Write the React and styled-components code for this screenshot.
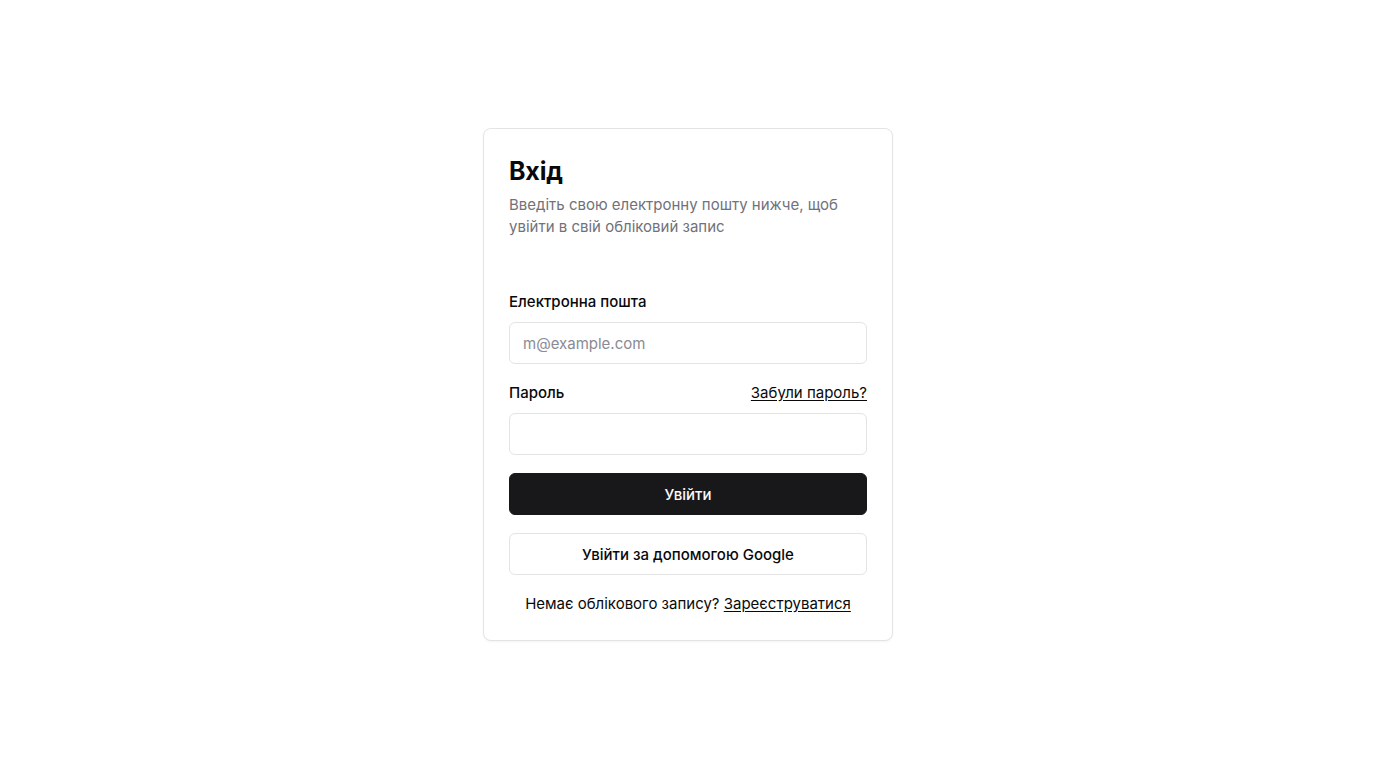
import React from 'react';
import styled, { createGlobalStyle } from 'styled-components';

const GlobalStyle = createGlobalStyle`
  html, body {
    margin: 0;
    padding: 0;
    background: #ffffff;
    font-family: Inter, "Noto Sans", sans-serif;
    color: #09090b;
  }
  * {
    box-sizing: border-box;
  }
`;

const Page = styled.div`
  width: 100%;
  min-height: 100vh;
  display: flex;
  align-items: center;
  justify-content: center;
`;

const Card = styled.div`
  width: 410px;
  border: 1px solid #e4e4e7;
  border-radius: 8px;
  background: #fff;
  box-shadow: 0 1px 2px rgba(0, 0, 0, 0.05);
  padding: 26px 25px 26px;
  display: flex;
  flex-direction: column;
`;

const Title = styled.h1`
  margin: 0;
  font-size: 25px;
  line-height: 32px;
  font-weight: 700;
  letter-spacing: -0.2px;
`;

const Description = styled.p`
  margin: 7px 0 0;
  font-size: 15px;
  line-height: 22px;
  color: #71717a;
`;

const Form = styled.form`
  margin-top: 53px;
  display: flex;
  flex-direction: column;
`;

const Field = styled.div`
  display: flex;
  flex-direction: column;
  gap: 10px;
  margin-bottom: 18px;
`;

const LabelRow = styled.div`
  display: flex;
  align-items: center;
  justify-content: space-between;
`;

const Label = styled.label`
  font-size: 15px;
  line-height: 21px;
  font-weight: 500;
`;

const TextLink = styled.a`
  font-size: 15px;
  line-height: 21px;
  color: #09090b;
  text-decoration: underline;
  text-underline-offset: 2px;
`;

const Input = styled.input`
  height: 42px;
  width: 100%;
  border: 1px solid #e4e4e7;
  border-radius: 6px;
  padding: 2px 13px 0;
  font-family: inherit;
  font-size: 15px;
  color: #09090b;
  background: #fff;
  outline: none;

  &::placeholder {
    color: #8a8a93;
  }
`;

const Button = styled.button`
  height: 42px;
  width: 100%;
  border-radius: 6px;
  padding-top: 2px;
  font-family: inherit;
  font-size: 15px;
  font-weight: 500;
  cursor: pointer;
  margin-bottom: 18px;
  border: 1px solid ${p => (p.$variant === 'outline' ? '#e4e4e7' : '#18181b')};
  background: ${p => (p.$variant === 'outline' ? '#ffffff' : '#18181b')};
  color: ${p => (p.$variant === 'outline' ? '#09090b' : '#fafafa')};
`;

const Footer = styled.div`
  text-align: center;
  font-size: 15px;
  line-height: 20px;
`;

export default function App() {
  return (
    <>
      <GlobalStyle />
      <Page>
        <Card>
          <Title>Вхід</Title>
          <Description>
            Введіть свою електронну пошту нижче, щоб увійти в свій обліковий запис
          </Description>
          <Form onSubmit={e => e.preventDefault()}>
            <Field>
              <Label htmlFor="email">Електронна пошта</Label>
              <Input id="email" type="email" placeholder="m@example.com" />
            </Field>
            <Field>
              <LabelRow>
                <Label htmlFor="password">Пароль</Label>
                <TextLink href="#">Забули пароль?</TextLink>
              </LabelRow>
              <Input id="password" type="password" />
            </Field>
            <Button type="submit">Увійти</Button>
            <Button type="button" $variant="outline">Увійти за допомогою Google</Button>
          </Form>
          <Footer>
            Немає облікового запису? <TextLink href="#">Зареєструватися</TextLink>
          </Footer>
        </Card>
      </Page>
    </>
  );
}
